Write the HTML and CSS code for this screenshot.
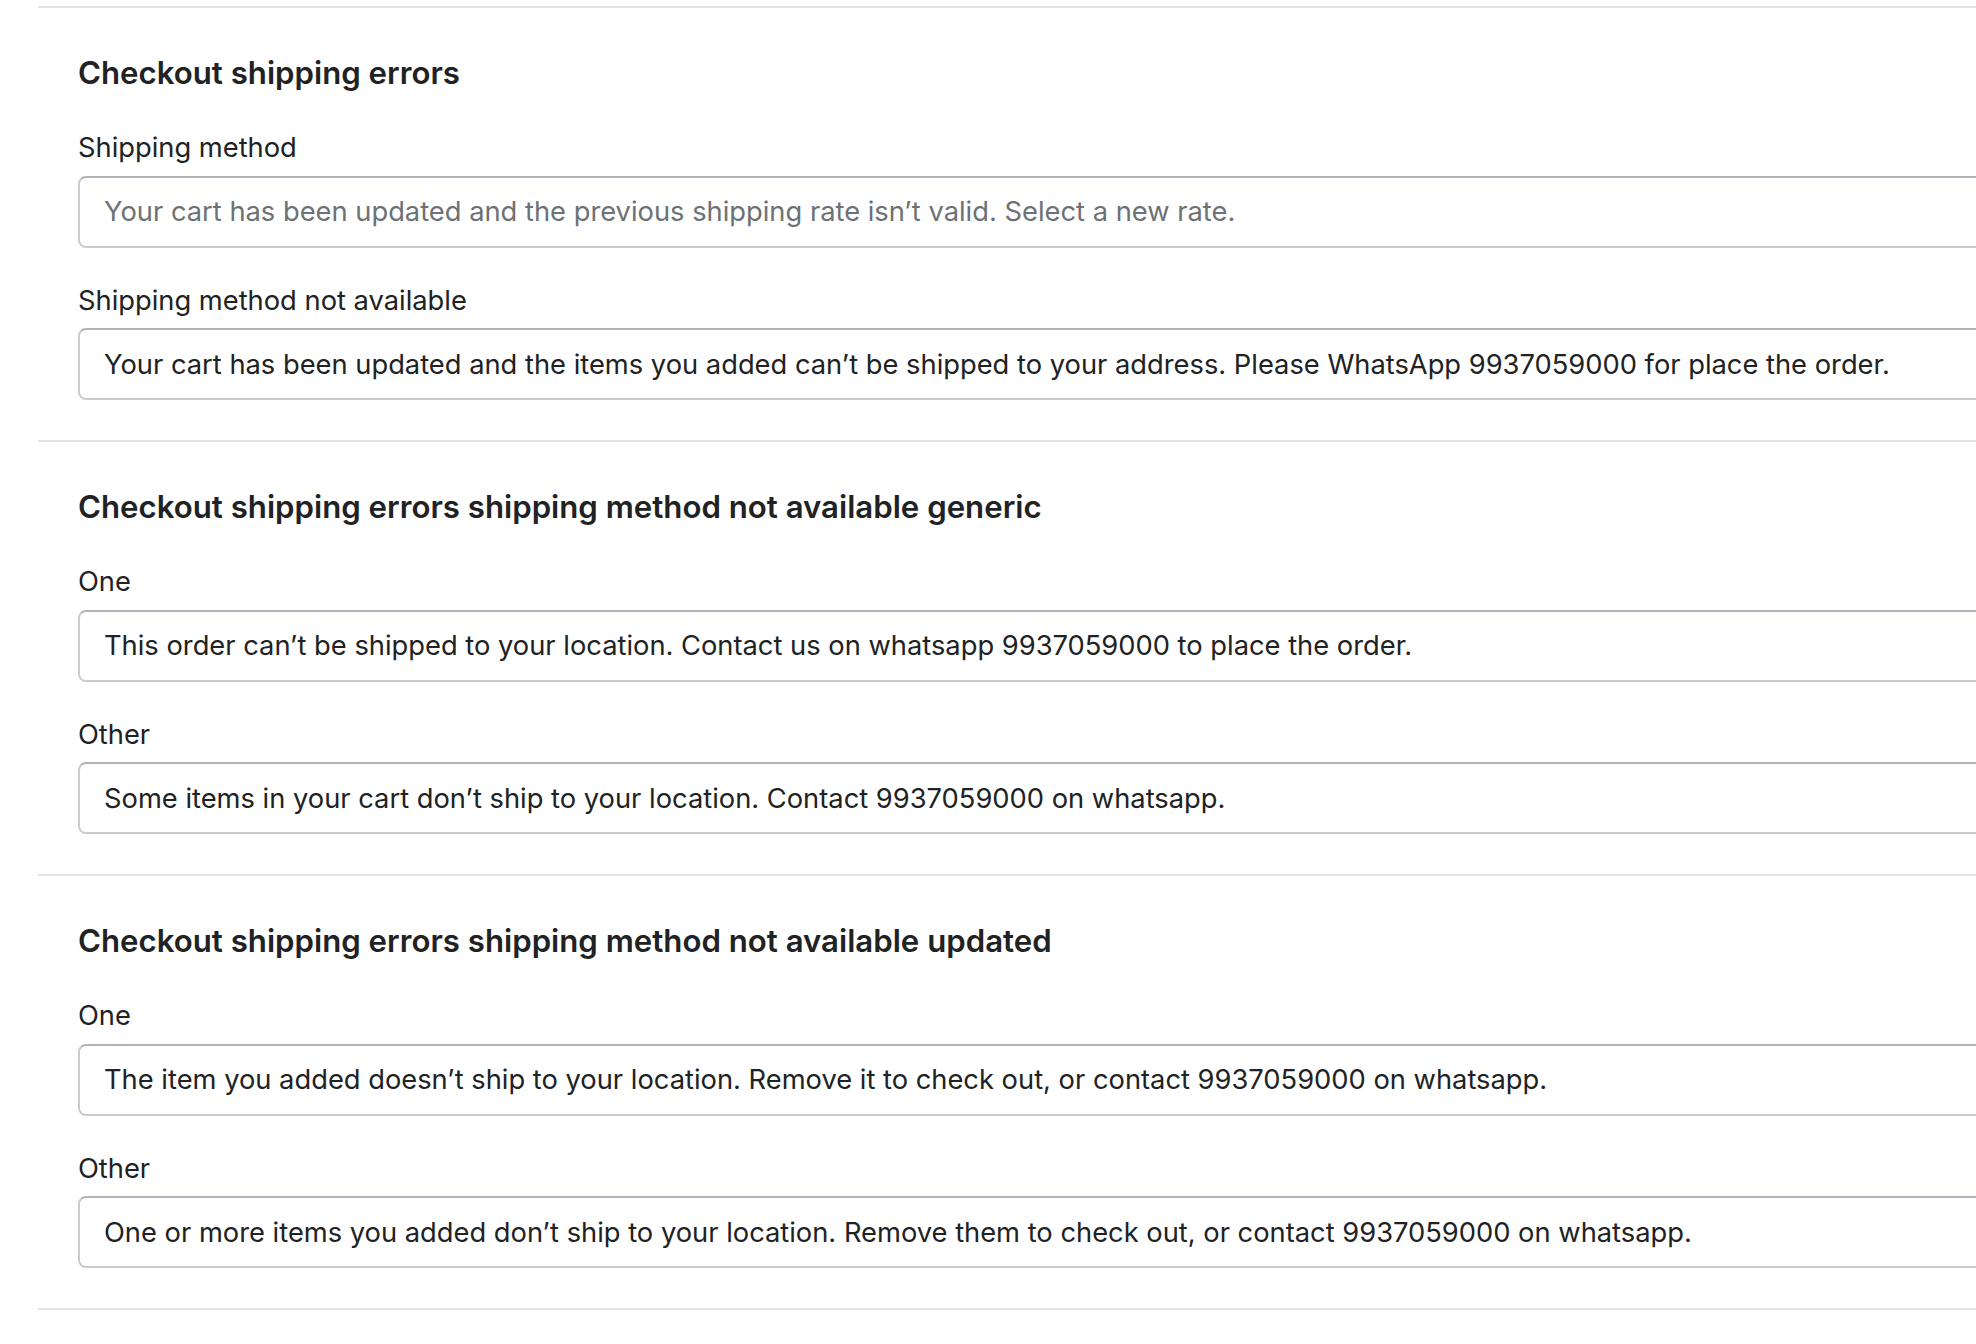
FILE: index.html
```html
<!DOCTYPE html>
<html lang="en">
<head>
<meta charset="utf-8">
<title>Checkout shipping errors</title>
<link rel="stylesheet" href="styles.css">
</head>
<body>
<div class="page">
  <div class="sections">
    <section class="section">
      <h2 class="section-title">Checkout shipping errors</h2>
      <div class="fields">
        <div class="field">
          <label class="field-label" for="f1">Shipping method</label>
          <input class="field-input" id="f1" type="text" placeholder="Your cart has been updated and the previous shipping rate isn’t valid. Select a new rate.">
        </div>
        <div class="field">
          <label class="field-label" for="f2">Shipping method not available</label>
          <input class="field-input" id="f2" type="text" value="Your cart has been updated and the items you added can’t be shipped to your address. Please WhatsApp 9937059000 for place the order.">
        </div>
      </div>
    </section>
    <section class="section">
      <h2 class="section-title">Checkout shipping errors shipping method not available generic</h2>
      <div class="fields">
        <div class="field">
          <label class="field-label" for="f3">One</label>
          <input class="field-input" id="f3" type="text" value="This order can’t be shipped to your location. Contact us on whatsapp 9937059000 to place the order.">
        </div>
        <div class="field">
          <label class="field-label" for="f4">Other</label>
          <input class="field-input" id="f4" type="text" value="Some items in your cart don’t ship to your location. Contact 9937059000 on whatsapp.">
        </div>
      </div>
    </section>
    <section class="section">
      <h2 class="section-title">Checkout shipping errors shipping method not available updated</h2>
      <div class="fields">
        <div class="field">
          <label class="field-label" for="f5">One</label>
          <input class="field-input" id="f5" type="text" value="The item you added doesn’t ship to your location. Remove it to check out, or contact 9937059000 on whatsapp.">
        </div>
        <div class="field">
          <label class="field-label" for="f6">Other</label>
          <input class="field-input" id="f6" type="text" value="One or more items you added don’t ship to your location. Remove them to check out, or contact 9937059000 on whatsapp.">
        </div>
      </div>
    </section>
  </div>
</div>
</body>
</html>
```

FILE: styles.css
```css
html, body {
  margin: 0;
  padding: 0;
  background: #ffffff;
}

body {
  overflow: hidden;
  font-family: Inter, "Noto Sans", "Liberation Sans", sans-serif;
  color: #202223;
}

.page {
  width: 2300px;
  padding: 6px 0 0 38px;
}

.sections {
  border-top: 2px solid #e1e3e5;
}

.section {
  border-bottom: 2px solid #e1e3e5;
  padding: 45px 40px 40px 40px;
}

.section-title {
  margin: 0 0 37px 0;
  font-size: 31.2px;
  line-height: 40px;
  font-weight: 600;
  color: #202223;
}

.fields {
  display: flex;
  flex-direction: column;
  gap: 35px;
}

.field {
  display: flex;
  flex-direction: column;
  gap: 9.5px;
}

.field-label {
  font-size: 27.3px;
  line-height: 36px;
  color: #202223;
}

.field-input {
  box-sizing: border-box;
  height: 72px;
  width: 100%;
  margin: 0;
  padding: 0 24px;
  border: 2px solid #c9cccf;
  border-top-color: #aeb4b9;
  border-radius: 8px;
  background: #ffffff;
  font-family: Inter, "Noto Sans", "Liberation Sans", sans-serif;
  font-size: 27.3px;
  line-height: 36px;
  color: #202223;
  outline: none;
}

.field-input::placeholder {
  color: #6d7175;
  opacity: 1;
}
```
